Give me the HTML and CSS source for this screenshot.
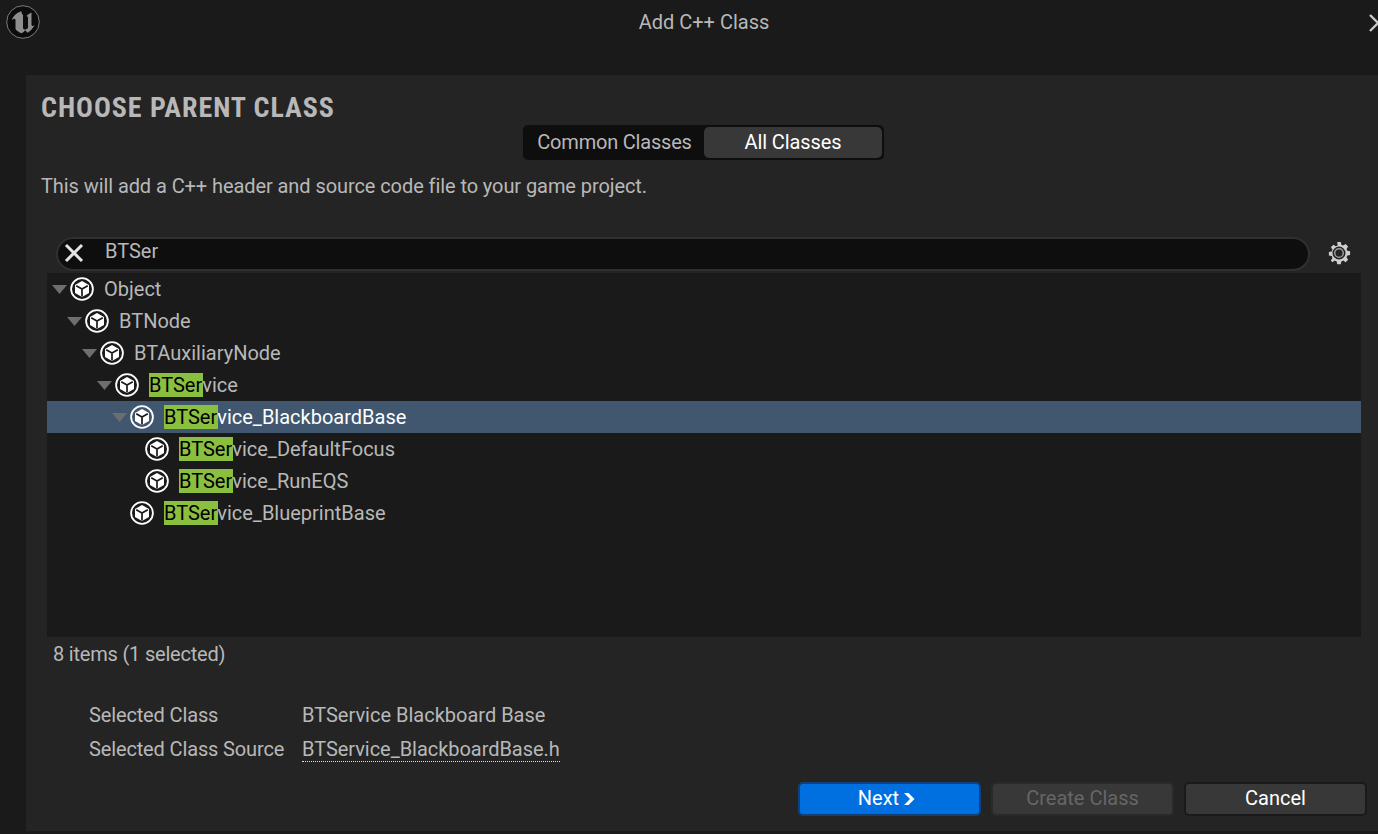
FILE: index.html
```html
<!DOCTYPE html>
<html lang="en">
<head>
<meta charset="utf-8">
<title>Add C++ Class</title>
<link rel="stylesheet" href="styles.css">
</head>
<body>
<svg class="defs" width="0" height="0" aria-hidden="true">
  <symbol id="cube" viewBox="0 0 24 24">
    <circle cx="12" cy="12" r="10.900" fill="none" stroke="#fff" stroke-width="1.800"/>
    <path d="M12 4l7 3.900v8.200L12 20l-7-3.900V7.900z" fill="#fff"/>
    <path d="M6.200 8.700l5.800 3.300 5.800-3.300M12 12v7.500" fill="none" stroke="#1a1a1a" stroke-width="1.700"/>
  </symbol>
</svg>
<div class="window">
  <header class="titlebar">
    <svg class="logo" viewBox="0 0 34 34" width="34" height="34">
      <circle cx="17" cy="17" r="16.300" fill="#0c0c0c" stroke="#7d7d7d" stroke-width="1"/>
      <path d="M14.500 6.500C10 8 7 11 5.500 15.500c1-1 2-1.700 2.800-1.700.9 0 1.200.7 1.200 1.700v8c0 1.300 3 3.700 6 4.700 1.500-.8 2.800-1.800 3.700-3l2.300 2.600c3-1.700 5.500-4.200 7.200-8-1 .9-1.900 1.400-2.400 1.200-.5-.2-.8-.8-.8-1.500V7.500c-1.700.7-3.700 2-5 3.500l1.500 1v11c-.8.800-1.700 1.300-2.700 1.500-1.200.2-2.300-.5-2.300-1.800V10c-1-.8-1.600-2-1.500-3.500z" fill="#8e8e8e"/>
    </svg>
    <div class="wintitle">Add C++ Class</div>
    <svg class="close" viewBox="0 0 20 20" width="20" height="20">
      <path d="M2 2l8 8-8 8" fill="none" stroke="#c8c8c8" stroke-width="2.400"/>
    </svg>
  </header>
  <main class="panel">
    <h1 class="heading">CHOOSE PARENT CLASS</h1>
    <div class="tabs-row">
      <div class="tabs">
        <div class="tab">Common Classes</div>
        <div class="tab tab-on">All Classes</div>
      </div>
    </div>
    <p class="desc">This will add a C++ header and source code file to your game project.</p>
    <div class="search-row">
      <div class="search">
        <svg class="clear" viewBox="0 0 20 20" width="20" height="20">
          <path d="M2 2l16 16M18 2L2 18" stroke="#e4e4e4" stroke-width="3" fill="none"/>
        </svg>
        <span class="query">BTSer</span>
      </div>
      <svg class="gear" viewBox="0 0 24 24" width="24" height="24">
        <path fill="#cfcfcf" fill-rule="evenodd" d="M10.200 1h3.600l.5 2.800 1.900.8 2.400-1.600 2.500 2.500-1.600 2.400.8 1.900 2.800.5v3.600l-2.800.5-.8 1.900 1.600 2.400-2.500 2.500-2.400-1.600-1.900.8-.5 2.800h-3.600l-.5-2.800-1.900-.8-2.400 1.600L3.900 19.400l1.600-2.400-.8-1.900-2.800-.5v-3.600l2.800-.5.8-1.900-1.600-2.400 2.500-2.500 2.400 1.600 1.900-.8zM12 5.500a6.500 6.500 0 1 0 0 13 6.500 6.500 0 0 0 0-13z"/>
        <circle cx="12" cy="12" r="4.300" fill="none" stroke="#9a9a9a" stroke-width="1.500"/>
      </svg>
    </div>
    <section class="tree">
      <div class="row d0"><i class="arrow"></i><svg class="cube"><use href="#cube"/></svg><span class="name">Object</span></div>
      <div class="row d1"><i class="arrow"></i><svg class="cube"><use href="#cube"/></svg><span class="name">BTNode</span></div>
      <div class="row d2"><i class="arrow"></i><svg class="cube"><use href="#cube"/></svg><span class="name">BTAuxiliaryNode</span></div>
      <div class="row d3"><i class="arrow"></i><svg class="cube"><use href="#cube"/></svg><span class="name"><mark>BTSer</mark>vice</span></div>
      <div class="row d4 selected"><i class="arrow"></i><svg class="cube"><use href="#cube"/></svg><span class="name"><mark>BTSer</mark>vice_BlackboardBase</span></div>
      <div class="row d5"><i class="noarrow"></i><svg class="cube"><use href="#cube"/></svg><span class="name"><mark>BTSer</mark>vice_DefaultFocus</span></div>
      <div class="row d5"><i class="noarrow"></i><svg class="cube"><use href="#cube"/></svg><span class="name"><mark>BTSer</mark>vice_RunEQS</span></div>
      <div class="row d4"><i class="noarrow"></i><svg class="cube"><use href="#cube"/></svg><span class="name"><mark>BTSer</mark>vice_BlueprintBase</span></div>
    </section>
    <div class="status">8 items (1 selected)</div>
    <dl class="info">
      <dt>Selected Class</dt><dd>BTService Blackboard Base</dd>
      <dt>Selected Class Source</dt><dd><span class="link">BTService_BlackboardBase.h</span></dd>
    </dl>
    <div class="actions">
      <button class="btn primary">Next<svg class="next" viewBox="0 0 12 12" width="12" height="12"><path d="M1 0l6 6-6 6h4.500l6-6-6-6z" fill="#fff"/></svg></button>
      <button class="btn disabled">Create Class</button>
      <button class="btn">Cancel</button>
    </div>
  </main>
</div>
</body>
</html>
```
FILE: styles.css
```css
* { box-sizing: border-box; }
html, body { margin: 0; height: 100%; overflow: hidden; }
body { background: #1a1a1a; color: #b8b8b8; font: 20px/24px Roboto, "Liberation Sans", sans-serif; }
.defs { display: block; height: 0; }
.window { width: 1378px; height: 834px; display: flex; flex-direction: column; overflow: hidden; }
.titlebar { height: 75px; flex: none; display: grid; grid-template-columns: 1fr auto 1fr; align-items: start; padding: 5px 0 0 6px; }
.logo { display: block; }
.wintitle { padding-top: 5px; margin-left: 24px; color: #b8b8b8; }
.close { justify-self: end; margin: 8px -10px 0 0; }
.panel { margin-left: 26px; height: 756px; flex: none; background: #242424; padding: 0 0 0 15px; display: flex; flex-direction: column; }
.heading { margin: 17px 0 0; font-size: 28px; line-height: 32px; font-weight: 700; color: #b8b8b8; font-stretch: 87%; letter-spacing: .95px; height: 33px; white-space: nowrap; }
.tabs-row { display: flex; padding-left: 482px; }
.tabs { width: 361px; height: 35px; background: #0e0e0e; border-radius: 5px; display: flex; padding: 2px; }
.tab { width: 179px; line-height: 30px; text-align: center; letter-spacing: -.2px; }
.tab-on { width: 178px; background: #383838; color: #fff; border-radius: 5px; letter-spacing: -.1px; }
.desc { margin: 14px 0 0; height: 24px; letter-spacing: -.08px; }
.search-row { display: flex; align-items: center; margin: 39px 0 0 15px; height: 34px; }
.search { width: 1254px; height: 34px; border-radius: 17px; background: #0e0e0e; border: 2px solid #303030; display: flex; align-items: center; padding-left: 6px; }
.clear { flex: none; margin-top: -2px; }
.query { margin-left: 21px; position: relative; top: -3px; }
.gear { margin: -3px 0 0 17px; }
.tree { margin: 2px 17px 0 6px; height: 364px; background: #1a1a1a; }
.row { height: 32px; display: flex; align-items: center; }
.selected { background: #40576f; color: #fff; }
.d0 { padding-left: 5px; }
.d1 { padding-left: 20px; }
.d2 { padding-left: 35px; }
.d3 { padding-left: 50px; }
.d4 { padding-left: 65px; }
.d5 { padding-left: 80px; }
.arrow { width: 15px; height: 9px; background: #6e6e6e; clip-path: polygon(0 0, 100% 0, 50% 100%); flex: none; margin-top: 1px; }
.noarrow { width: 15px; height: 9px; flex: none; }
.cube { width: 24px; height: 24px; flex: none; margin-left: 3px; }
.name { margin-left: 10px; white-space: pre; }
mark { background: #8bbf3f; color: #000; display: inline-block; padding-right: 1px; margin-right: -1px; }
.status { margin: 5px 0 0 12px; height: 24px; letter-spacing: -.2px; }
.info { margin: 37px 0 0 48px; display: grid; grid-template-columns: 213px auto; row-gap: 10px; justify-content: start; }
.info dt { margin: 0; letter-spacing: -.14px; }
.info dd { margin: 0; }
.link { display: inline-block; border-bottom: 1px dotted #e0e0e0; line-height: 23px; letter-spacing: -.04px; }
.actions { display: flex; gap: 10px; margin: 20px 0 0 757px; }
.btn { width: 183px; height: 34px; margin: 0; padding: 0 0 2px; border-radius: 5px; border: 2px solid #1a1a1a; background: #383838; color: #fff; font: inherit; display: flex; align-items: center; justify-content: center; }
.primary { background: #0070e0; border-color: #10417a; }
.disabled { background: #383838; color: #666; border-color: #2a2a2a; }
.next { margin: 2px 6px 0 4px; }
```
